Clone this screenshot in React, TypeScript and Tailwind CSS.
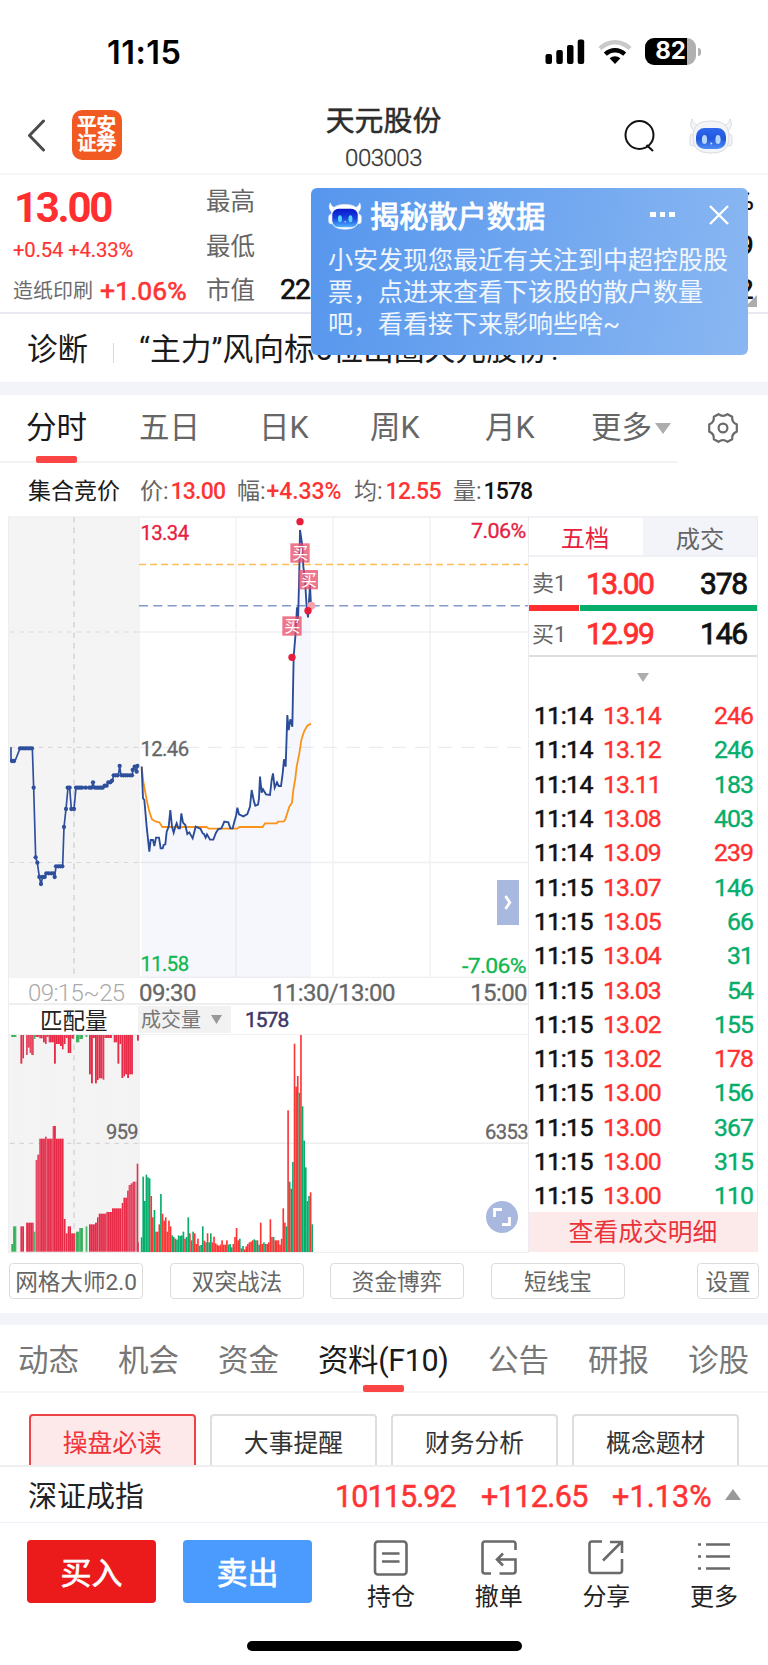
import React from "react";

type Bar = [number, string];
type Range = [number, number, number, string];

const RED = "#e52b48";
const GREEN = "#2fae54";

const auction =
  "33,712 33,753 45,753 60,715 97,715 101,833 107,1042 112,1058 118,1101 123,1122 128,1101 135,1101 138,1090 162,1090 164,1101 168,1069 188,1069 192,951 198,897 204,833 209,833 214,897 222,897 228,833 275,833 279,817 283,833 308,833 320,827 325,817 337,812 341,796 355,796 359,768 363,796 396,796 402,768 408,785 413,768";
const auctionDots =
  "36,753 42,753 60,715 66,715 72,715 78,715 84,715 90,715 96,715 101,833 107,1042 112,1058 118,1101 123,1122 128,1101 134,1101 139,1090 146,1090 154,1090 161,1090 164,1101 168,1069 175,1069 181,1069 187,1069 192,951 198,897 203,833 209,833 214,897 222,897 228,833 234,833 240,833 246,833 257,833 268,833 274,833 279,817 285,833 291,833 297,833 303,833 308,833 314,827 320,827 325,817 331,817 336,812 341,796 347,796 353,796 359,768 365,796 371,796 377,796 383,796 390,796 396,796 398,780 404,770 410,785 412,768";
const price =
  "35,770 39,865 43,870 50,950 58,1025 62,990 69,990 73,1008 78,983 87,983 92,1015 98,1015 101,1005 106,1003 110,965 116,950 121,900 126,950 131,968 136,950 140,940 145,955 150,955 154,910 159,938 166,945 172,972 178,967 188,985 197,950 212,957 218,970 222,972 227,983 231,973 240,989 250,989 258,968 265,957 274,955 283,935 295,937 301,955 308,955 313,935 318,918 322,893 327,913 340,919 352,912 360,890 365,840 372,875 376,887 384,884 387,865 390,800 395,848 399,838 408,853 420,855 425,810 429,790 434,833 441,817 446,828 453,828 458,790 462,748 467,770 472,615 476,660 481,628 487,650 491,440 496,380 501,292 504,338 508,180 510,60 516,100 520,170 525,210 530,290 534,322 540,225 543,288";
const average =
  "35,770 40,815 50,870 58,905 66,928 78,935 88,937 97,951 230,951 236,956 322,956 328,951 398,951 405,940 440,940 444,935 462,934 466,928 478,890 486,878 490,840 496,805 500,770 508,730 514,690 522,665 532,647 543,641";

const volume: Bar[] = (
  "802g 620g 693g 614g 622g 625g 678r 742r 720g 785r 785r 763r 672g 731r 752r 742r 785r 752r 769r 796g 801g 806r 809g 796g 798g 796g 785g 806r 801g 742g 790r 811r 785g 790r 822r 806r 827g 825g 769g 812r 817g 790r 817g 790g 817r 800r 820r 824r 827r 824r 811r 824r 824r 811r 824g 822g 832g 822r 801r 774r 811r 806g 835r 828g 838r 829r 822r 817r 815r 811r 808g 811g 811r 824g 758r 822r 817g 822g 822r 817r 748r 801r 801g 811r 811r 811r 824r 806r 715r 758r 769g 421r 635g 656r 576g 221r 350r 318r 368g 195r 409g 512g 592g 693g 678g 667r 763g"
)
  .split(" ")
  .map((s) => [parseInt(s, 10), s.slice(-1)]);

const matched: Range[] = [
  [34, 39, 822, GREEN], [39, 49, 769, GREEN], [61, 72, 769, RED], [78, 101, 758, RED], [101, 106, 785, GREEN],
  [107, 112, 570, RED], [112, 118, 554, RED], [118, 135, 506, RED], [135, 140, 500, RED], [140, 158, 506, RED],
  [158, 168, 468, RED], [168, 191, 506, RED], [191, 197, 747, RED], [197, 203, 790, RED], [203, 213, 769, RED],
  [213, 226, 790, RED], [228, 238, 785, GREEN], [238, 249, 774, GREEN], [257, 262, 769, GREEN], [267, 285, 763, RED],
  [285, 291, 758, RED], [291, 296, 742, RED], [296, 319, 731, RED], [319, 336, 726, RED], [336, 365, 715, RED],
  [365, 370, 699, RED], [370, 381, 683, RED], [381, 386, 662, RED], [386, 392, 645, RED], [392, 398, 640, RED],
  [398, 406, 635, RED], [406, 410, 635, "#999999"], [410, 415, 581, RED], [413, 417, 817, RED],
];
const unmatched: Range[] = [
  [34, 49, 201, GREEN], [61, 67, 281, RED], [67, 72, 265, RED], [78, 83, 255, RED], [83, 89, 233, RED],
  [89, 94, 249, RED], [94, 101, 255, RED], [101, 106, 207, GREEN], [106, 118, 201, RED], [118, 128, 205, RED],
  [129, 135, 217, RED], [135, 140, 222, RED], [140, 146, 201, RED], [146, 162, 217, RED], [162, 168, 281, RED],
  [168, 180, 222, RED], [180, 186, 228, RED], [186, 191, 238, RED], [191, 197, 222, RED], [197, 203, 204, RED],
  [203, 214, 249, RED], [214, 222, 206, RED], [228, 238, 217, GREEN], [238, 249, 207, GREEN], [257, 262, 201, GREEN],
  [267, 273, 313, RED], [273, 279, 340, RED], [279, 285, 204, RED], [285, 291, 340, RED], [291, 296, 330, RED],
  [296, 308, 325, RED], [308, 313, 329, RED], [313, 336, 204, RED], [341, 352, 217, RED], [352, 358, 281, RED],
  [358, 364, 222, RED], [364, 370, 324, RED], [370, 375, 319, RED], [375, 381, 313, RED], [381, 387, 324, RED],
  [387, 399, 313, RED], [411, 417, 212, RED],
];

const trades: [string, string, string, boolean][] = [
  ["11:14", "13.14", "246", true],
  ["11:14", "13.12", "246", false],
  ["11:14", "13.11", "183", false],
  ["11:14", "13.08", "403", false],
  ["11:14", "13.09", "239", true],
  ["11:15", "13.07", "146", false],
  ["11:15", "13.05", "66", false],
  ["11:15", "13.04", "31", false],
  ["11:15", "13.03", "54", false],
  ["11:15", "13.02", "155", false],
  ["11:15", "13.02", "178", true],
  ["11:15", "13.00", "156", false],
  ["11:15", "13.00", "367", false],
  ["11:15", "13.00", "315", false],
  ["11:15", "13.00", "110", false],
];

function Robot({ className, soft }: { className: string; soft?: boolean }) {
  return (
    <svg viewBox="0 0 44 36" className={className}>
      <defs>
        <linearGradient id={soft ? "face-a" : "face-b"} x1="0" y1="0" x2="0" y2="1">
          <stop offset="0" stopColor={soft ? "#2f68ee" : "#0a16c8"} />
          <stop offset="0.5" stopColor={soft ? "#2257dc" : "#1740e0"} />
          <stop offset="1" stopColor={soft ? "#4d8cf5" : "#4fb4ff"} />
        </linearGradient>
      </defs>
      <g fill={soft ? "#f3f4f7" : "#ffffff"} stroke={soft ? "#d5d7dd" : "#e8eefb"} strokeWidth="0.9">
        <path d="M3 1C1 5 1 9 5 13L10 7C6 7 4 5 3 1ZM41 1C43 5 43 9 39 13L34 7C38 7 40 5 41 1Z" />
        <rect x="1" y="16" width="6" height="12" rx="3" />
        <rect x="37" y="16" width="6" height="12" rx="3" />
        <path d="M22 3C34 3 40 7 40 19C40 30 35 35 22 35C9 35 4 30 4 19C4 7 10 3 22 3Z" />
      </g>
      <rect x={soft ? 7 : 5.5} y={soft ? 10 : 8.5} width={soft ? 30 : 33} height={soft ? 21 : 24} rx="8.5" fill={soft ? "url(#face-a)" : "url(#face-b)"} />
      <ellipse cx="15.5" cy="21.5" rx="2.6" ry="4.6" fill={soft ? "#b5d5fb" : "#58d4ff"} />
      <ellipse cx="29" cy="21.5" rx="2.6" ry="4.6" fill={soft ? "#b5d5fb" : "#58d4ff"} />
      <circle cx="22.3" cy="25.5" r="1" fill="#cfe2ff" />
    </svg>
  );
}

function StatusBar() {
  return (
    <div className="flex h-[95px] items-start justify-between pl-[107px] pr-[67px]">
      <div className="mt-[37px] font-[Inter] text-[32.5px] leading-[32px] font-semibold tracking-[0.5px] text-black">11:15</div>
      <div className="mt-[38px] flex items-center">
        <svg width="40" height="27" viewBox="0 0 40 27">
          <rect x="0.5" y="16" width="6.5" height="10" rx="2" />
          <rect x="11.3" y="12" width="6.5" height="14" rx="2" />
          <rect x="22" y="7" width="6.5" height="19" rx="2" />
          <rect x="32.7" y="1.5" width="6.5" height="24.5" rx="2" />
        </svg>
        <svg width="34" height="26" viewBox="0 0 34 26" className="ml-[13px]" fill="none">
          <path d="M2 9.5C10.5 1.2 23.5 1.2 32 9.5" stroke="#c9c9c9" strokeWidth="4.4" />
          <path d="M7.3 15.2C13 9.9 21 9.9 26.7 15.2" stroke="#000" strokeWidth="4.4" />
          <path d="M11.6 19.3C14.8 16.6 19.2 16.6 22.4 19.3L17 25Z" fill="#000" />
        </svg>
        <div className="ml-[13px] flex h-[27px] w-[51px] items-center justify-center rounded-[9px] bg-[linear-gradient(90deg,#000_83%,#b0b0b0_83%)] pb-px font-[Inter] text-[24px] leading-none font-bold text-white">
          82
        </div>
        <div className="ml-[2px] h-[8px] w-[3px] rounded-r-full bg-[#b0b0b0]" />
      </div>
    </div>
  );
}

function Header() {
  return (
    <div className="flex h-[80px] border-b-2 border-[#f7f7f7]">
      <div className="flex w-[255px] pl-[26px] pt-[15px]">
        <svg width="22" height="34" viewBox="0 0 22 34" className="mt-[8px]" fill="none" stroke="#4b4b4b" strokeWidth="3" strokeLinecap="round" strokeLinejoin="round">
          <path d="M17.5 3L3.5 17.5L17.5 32" />
        </svg>
        <div className="ml-[23.5px] flex h-[50px] w-[50px] flex-col items-center justify-center rounded-[10px] bg-[#f15a22] text-[19.5px] leading-[18px] text-white [-webkit-text-stroke:0.9px]">
          <span>平安</span>
          <span>证券</span>
        </div>
      </div>
      <div className="flex w-[257px] flex-col items-center pt-[10px]">
        <div className="text-[28.9px] leading-[32px] text-[#2d2d2d] [-webkit-text-stroke:0.5px]">天元股份</div>
        <div className="mt-[8px] text-[24px] leading-[26px] font-light tracking-[-0.5px] text-[#333] [-webkit-text-stroke:0.3px]">003003</div>
      </div>
      <div className="flex flex-1 pl-[112px] pt-[23px]">
        <svg width="32" height="34" viewBox="0 0 32 34" fill="none" stroke="#111" strokeWidth="2" className="mt-[1px]">
          <circle cx="15.5" cy="16" r="14" />
          <path d="M22.5 26L29 32" />
        </svg>
        <Robot soft className="ml-[33px] h-[36px] w-[44px]" />
      </div>
    </div>
  );
}

function Quote() {
  return (
    <div className="relative">
      <div className="flex h-[139px] border-b-2 border-[#e7e8f1]">
        <div className="w-[206px] pl-[13px]">
          <div className="mt-[8px] pl-px text-[42px] leading-[50px] font-bold tracking-[-2.3px] text-[#ff2f2f]">13.00</div>
          <div className="mt-[4px] text-[20.3px] leading-[26px] tracking-[-0.15px] text-[#ff3333] [-webkit-text-stroke:0.2px]">+0.54 +4.33%</div>
          <div className="mt-[15px] flex items-center text-[20px] leading-[26px] whitespace-nowrap text-[#6b6b6b]">
            造纸印刷
            <span className="ml-[7px] text-[26.5px] tracking-[0.1px] text-[#ff3333] [-webkit-text-stroke:0.6px]">+1.06%</span>
          </div>
        </div>
        <div className="w-[74px] text-[24.5px] leading-[44.5px] text-[#666]">
          <div className="mt-[5px]">最高</div>
          <div>最低</div>
          <div>市值</div>
        </div>
        <div className="mt-[93px] text-[28.5px] leading-[44px] tracking-[-1px] text-[#111] [-webkit-text-stroke:0.6px]">22</div>
        <div className="ml-auto pr-[14px] text-right text-[28px] leading-[44.5px] font-medium text-[#111]">
          <div className="mt-[4px]">%</div>
          <div>9</div>
          <div>2</div>
        </div>
        <svg width="12" height="12" viewBox="0 0 12 12" className="absolute top-[120px] right-[11px]">
          <path d="M12 0V12H0Z" fill="#adadad" />
        </svg>
      </div>
      <div className="flex h-[68px] items-center pt-[3px] whitespace-nowrap text-[#1a1a1a]">
        <div className="pl-[27px] text-[30.5px] leading-[34px]">诊断</div>
        <div className="mt-[7px] ml-[25px] h-[20px] w-px bg-[#d9d9d9]" />
        <div className="ml-[25px] text-[30.8px] leading-[34px]">“主力”风向标5位出圈天元股份?</div>
      </div>
      <div className="absolute top-[13px] left-[311px] h-[167px] w-[437px] rounded-[6px] bg-[linear-gradient(100deg,#5696ed_0%,#6aa3ef_40%,#8ab7f2_100%)] pt-[10px] pl-[17px] text-white">
        <div className="flex h-[38px] items-center">
          <Robot className="-mt-[3px] h-[28px] w-[34px]" />
          <div className="ml-[8px] text-[29.2px] leading-[38px] [-webkit-text-stroke:0.9px]">揭秘散户数据</div>
          <div className="-mt-[5px] ml-[105px] flex gap-[4px]">
            <i className="h-[5.5px] w-[5.5px] bg-white" />
            <i className="h-[5.5px] w-[5.5px] bg-white" />
            <i className="h-[5.5px] w-[5.5px] bg-white" />
          </div>
          <svg width="20" height="20" viewBox="0 0 20 20" className="-mt-[5px] ml-[34px]" stroke="#fff" strokeWidth="2.4">
            <path d="M1 1L19 19M19 1L1 19" />
          </svg>
        </div>
        <div className="mt-[9px] w-[402px] text-[25px] leading-[32px] text-white/90">
          <div>小安发现您最近有关注到中超控股股</div>
          <div>票，点进来查看下该股的散户数量</div>
          <div>吧，看看接下来影响些啥~</div>
        </div>
      </div>
    </div>
  );
}

function PeriodTabs() {
  return (
    <div className="flex h-[68px] text-[30.5px] leading-[34px] text-[#666]">
      <div className="flex w-[678px] border-b-2 border-[#f2f2f2] pl-[26px] whitespace-nowrap">
        <div className="flex w-[113px] flex-col text-[#1a1a1a]">
          <span className="mt-[16px]">分时</span>
          <span className="mt-[11px] ml-[10px] h-[7px] w-[41px] shrink-0 rounded-[2px] bg-[#fb4444]" />
        </div>
        <span className="mt-[16px] w-[120px]">五日</span>
        <span className="mt-[16px] w-[111px]">日K</span>
        <span className="mt-[16px] w-[115px]">周K</span>
        <span className="mt-[16px] w-[106px]">月K</span>
        <span className="mt-[16px]">更多</span>
        <svg width="16" height="11" viewBox="0 0 16 11" className="mt-[28px] ml-[3px] shrink-0">
          <path d="M0 0H16L8 11Z" fill="#adadad" />
        </svg>
      </div>
      <svg width="32" height="32" viewBox="0 0 32 32" className="mt-[17px] ml-[29px]" fill="none" stroke="#6a6a6a" strokeWidth="2.2" strokeLinejoin="round">
        <path d="M11.5 2.2Q16 5.6 20.5 2.2L25.2 4.8Q24.6 10.4 29.8 12.4V19.6Q24.6 21.6 25.2 27.2L20.5 29.8Q16 26.4 11.5 29.8L6.8 27.2Q7.4 21.6 2.2 19.6V12.4Q7.4 10.4 6.8 4.8Z" />
        <circle cx="16" cy="16" r="4.4" />
      </svg>
    </div>
  );
}

function Summary() {
  return (
    <div className="flex h-[53px] items-center pt-[5px] pl-[28px] text-[23px] whitespace-nowrap text-[#666]">
      <div className="w-[112px] text-[#1a1a1a]">集合竞价</div>
      <div className="w-[97px]">
        价:<b className="ml-[2px] font-medium tracking-[-0.8px] text-[#ff3333]">13.00</b>
      </div>
      <div className="w-[117px]">
        幅:<b className="ml-px font-medium tracking-[-0.1px] text-[#ff3333]">+4.33%</b>
      </div>
      <div className="w-[99px]">
        均:<b className="ml-[3px] font-medium tracking-[-0.7px] text-[#ff3333]">12.55</b>
      </div>
      <div>
        量:<b className="ml-[2px] font-medium tracking-[-0.9px] text-[#111]">1578</b>
      </div>
    </div>
  );
}

function PriceChart() {
  return (
    <svg width="519" height="462" viewBox="9 516 519 462" className="block font-[Roboto]">
      <rect x="9" y="517" width="130" height="461" fill="#f4f4f4" />
      <path d="M139 517V978M236 517V978M333 517V978M430 517V978M139 632H528M139 862.5H528M9 517H528M139 977.5H528" stroke="#f0f0f0" strokeWidth="1.3" />
      <path d="M139 747.3H528" stroke="#ececec" strokeWidth="1.2" strokeDasharray="14 9" />
      <path d="M10 632H139M10 747.3H139M10 862.5H139" stroke="#d9d9d9" strokeWidth="1.2" strokeDasharray="4.5 5" />
      <path d="M74 517V978" stroke="#dadada" strokeWidth="1.8" strokeDasharray="5.5 5" />
      <path d="M139 564.5H528" stroke="#fdbd5b" strokeWidth="1.5" strokeDasharray="7 4" />
      <path d="M139 605.7H528" stroke="#8598cb" strokeWidth="1.6" strokeDasharray="9 5.3" />
      <g transform="translate(0 510) scale(0.33333)" fill="none" strokeLinejoin="round">
        <polyline points={auction} stroke="#2d4f9c" strokeWidth="5" />
        {auctionDots.split(" ").map((p) => {
          const [x, y] = p.split(",");
          return <circle key={p} cx={x} cy={y} r="6.4" fill="#2d4f9c" />;
        })}
      </g>
      <g transform="translate(130 510) scale(0.33333)" fill="none" strokeLinejoin="miter">
        <polygon points={price + " 543,1402 35,1402"} fill="#5f7fd0" fillOpacity="0.06" />
        <polyline points={average} stroke="#fb9219" strokeWidth="5.4" />
        <polyline points={price} stroke="#2b4c99" strokeWidth="5.6" />
        <circle cx="544" cy="287" r="12" fill="#f6a3ae" />
        <g fill="#e71d3c">
          <circle cx="510" cy="35" r="11" />
          <circle cx="534" cy="302" r="11" />
          <circle cx="486" cy="442" r="11" />
        </g>
        <g fill="#ea4a67" fillOpacity="0.75">
          <rect x="481" y="100" width="58" height="58" />
          <rect x="506" y="180" width="58" height="58" />
          <rect x="457" y="319" width="58" height="58" />
        </g>
      </g>
      <g fill="#fff" fontSize="16" textAnchor="middle" fontFamily="'Noto Sans CJK SC', sans-serif">
        <text x="300" y="559">买</text>
        <text x="308.5" y="585.6">买</text>
        <text x="292" y="632">买</text>
      </g>
      <g fontSize="20.5" strokeWidth="0.3">
        <text x="140.5" y="539.7" textLength="48" lengthAdjust="spacingAndGlyphs" fill="#e6213f" stroke="#e6213f">13.34</text>
        <text x="140.5" y="756" textLength="48" lengthAdjust="spacingAndGlyphs" fill="#666" stroke="#666">12.46</text>
        <text x="140.5" y="971" textLength="48" lengthAdjust="spacingAndGlyphs" fill="#0fb850" stroke="#0fb850">11.58</text>
        <text x="471" y="538" textLength="54.5" lengthAdjust="spacingAndGlyphs" fill="#e6213f" stroke="#e6213f">7.06%</text>
        <text x="462" y="973" textLength="64" lengthAdjust="spacingAndGlyphs" fill="#0fb850" stroke="#0fb850">-7.06%</text>
      </g>
    </svg>
  );
}

function VolumeChart() {
  return (
    <svg width="519" height="219" viewBox="9 1034 519 219" className="block font-[Roboto]">
      <rect x="9" y="1034" width="130" height="218" fill="#f4f4f4" />
      <path d="M139 1034V1252M139 1143.3H528M9 1252.4H528" stroke="#eeeeee" strokeWidth="1.4" />
      <path d="M9 1034.3H528" stroke="#eeeeee" />
      <path d="M10 1143.3H139" stroke="#d4d4d4" strokeWidth="1.2" strokeDasharray="4.5 5" />
      <path d="M74 1034V1252" stroke="#dadada" strokeWidth="1.8" strokeDasharray="5.5 5" />
      <g transform="translate(0 970) scale(0.33333)">
        {matched.map(([a, b, top, c]) => (
          <rect key={a} x={a} y={top} width={b - a} height={845 - top} fill={c} />
        ))}
        {unmatched.map(([a, b, bottom, c]) => (
          <rect key={a} x={a} y={195} width={b - a} height={bottom - 195} fill={c} />
        ))}
        {Array.from({ length: 66 }, (_, i) => (
          <rect key={i} x={39 + i * 5.8} y="195" width="0.9" height="650" fill="#f4f4f4" fillOpacity="0.5" />
        ))}
        {volume.map(([top, c], i) => (
          <rect key={i} x={422.3 + i * 4.83} y={top} width="4.9" height={846 - top} fill={c === "r" ? "#fc3434" : "#06ad6b"} />
        ))}
      </g>
      <g fontSize="20.5" fill="#666" stroke="#666" strokeWidth="0.3">
        <text x="106" y="1138.5" textLength="32" lengthAdjust="spacingAndGlyphs">959</text>
        <text x="485" y="1138.5" textLength="43" lengthAdjust="spacingAndGlyphs">6353</text>
      </g>
    </svg>
  );
}

function Chart() {
  return (
    <div className="relative w-[520px] border-l border-[#eeeeee] tracking-[-0.6px]">
      <PriceChart />
      <div className="flex h-[27px] items-center border-b-2 border-[#efefef] pt-[5px] pr-px pl-[19px] text-[24px] leading-[22px] text-[#666]">
        <span className="w-[111px] font-light text-[#aaa]">09:15~25</span>
        <span className="w-[133px] [-webkit-text-stroke:0.3px]">09:30</span>
        <span className="[-webkit-text-stroke:0.3px]">11:30/13:00</span>
        <span className="ml-auto [-webkit-text-stroke:0.3px]">15:00</span>
      </div>
      <div className="flex h-[29px] items-center tracking-normal">
        <div className="w-[129px] pt-[3px] pl-[31px] text-[22.5px] leading-[26px] text-[#222]">匹配量</div>
        <div className="flex h-[27px] w-[93px] items-center bg-[#f2f2f2] pl-[3px] text-[20px] leading-[24px] text-[#777]">
          成交量
          <svg width="11" height="9" viewBox="0 0 11 9" className="ml-[10px]">
            <path d="M0 0H11L5.5 9Z" fill="#999" />
          </svg>
        </div>
        <div className="ml-[14px] text-[21px] leading-[24px] tracking-[-1px] text-[#3d3766] [-webkit-text-stroke:0.5px]">1578</div>
      </div>
      <VolumeChart />
      <div className="absolute top-[364px] left-[488px] flex h-[45px] w-[22px] items-center justify-center bg-[#a9b8de]">
        <svg width="8" height="15" viewBox="0 0 8 15" fill="none" stroke="#fff" strokeWidth="2.8">
          <path d="M1.5 1L5.8 7.5L1.5 14" />
        </svg>
      </div>
      <div className="absolute top-[685px] left-[477px] flex h-[32px] w-[32px] items-center justify-center rounded-full bg-[#a9b8de]">
        <svg width="18" height="18" viewBox="0 0 18 18" fill="none" stroke="#fff" strokeWidth="2.8">
          <path d="M1.5 9V1.5H9M16.5 9V16.5H9" />
        </svg>
      </div>
    </div>
  );
}

function OrderBook() {
  return (
    <div className="w-[230px] border-x border-[#ececf0]">
      <div className="flex h-[41px] border-y-2 border-[#f0f1f5] text-[24.3px] leading-[43px]">
        <div className="w-[114px] pt-px pr-[2px] text-center leading-[40px] text-[#e8203c]">五档</div>
        <div className="flex-1 bg-[#f3f4f9] text-center text-[#666]">成交</div>
      </div>
      <div className="flex h-[48px] items-center pl-[3px] text-[22px] text-[#666]">
        <span className="w-[54px] pt-[4px] whitespace-nowrap">卖1</span>
        <span className="pt-[5px] text-[30px] leading-[34px] tracking-[-1.6px] text-[#ff2f2f] [-webkit-text-stroke:0.8px]">13.00</span>
        <span className="ml-auto pt-[5px] pr-[10px] text-[30px] leading-[34px] tracking-[-1.2px] text-[#111] [-webkit-text-stroke:0.8px]">378</span>
      </div>
      <div className="flex h-[6px] gap-px">
        <div className="w-[50px] bg-[#ff2f2f]" />
        <div className="flex-1 bg-[#06ad6b]" />
      </div>
      <div className="flex h-[46px] items-center border-b-2 border-[#dedede] pl-[3px] text-[22px] text-[#666]">
        <span className="w-[54px] pt-[3px] whitespace-nowrap">买1</span>
        <span className="pt-[2px] text-[30px] leading-[34px] tracking-[-1.6px] text-[#ff2f2f] [-webkit-text-stroke:0.8px]">12.99</span>
        <span className="ml-auto pt-[2px] pr-[10px] text-[30px] leading-[34px] tracking-[-1.2px] text-[#111] [-webkit-text-stroke:0.8px]">146</span>
      </div>
      <div className="flex h-[41px] items-center justify-center">
        <svg width="12" height="9" viewBox="0 0 12 9">
          <path d="M0 0H12L6 9Z" fill="#adadad" />
        </svg>
      </div>
      {trades.map(([t, p, v, up], i) => (
        <div key={i} className="flex h-[34.3px] items-center pt-[2px] pr-[4px] pl-[5px] text-[24.8px] leading-[30px] tracking-[-0.9px]">
          <span className="w-[69px] tracking-[-0.6px] text-[#111] [-webkit-text-stroke:0.6px]">{t}</span>
          <span className="text-[#ff3030] [-webkit-text-stroke:0.4px]">{p}</span>
          <span className={up ? "ml-auto text-[#ff3030] [-webkit-text-stroke:0.4px]" : "ml-auto text-[#06ad6b] [-webkit-text-stroke:0.4px]"}>{v}</span>
        </div>
      ))}
      <div className="h-[40px] bg-[#fce9ea] text-center text-[24.8px] leading-[42px] text-[#ea3338]">查看成交明细</div>
    </div>
  );
}

function Chip({ label, className }: { label: string; className: string }) {
  return (
    <div className={"flex h-[36px] items-center justify-center rounded-[4px] border-[1.5px] border-[#dcdcdc] pt-[4px] text-[22.6px] leading-none whitespace-nowrap text-[#666] " + className}>
      {label}
    </div>
  );
}

function Action({ label, children }: { label: string; children: React.ReactNode }) {
  return (
    <div className="flex w-[60px] flex-col items-center text-[24px] leading-[28px] text-[#222]">
      <svg width="36" height="36" viewBox="0 0 36 36" fill="none" stroke="#6a6a6a" strokeWidth="2.6">
        {children}
      </svg>
      <span className="mt-[7px]">{label}</span>
    </div>
  );
}

export default function App() {
  return (
    <div className="flex h-[1665px] w-[768px] flex-col overflow-hidden bg-white font-[Roboto,'Noto_Sans_CJK_SC',sans-serif]">
      <StatusBar />
      <Header />
      <Quote />
      <div className="h-[13px] bg-[#f3f4f9]" />
      <PeriodTabs />
      <Summary />
      <div className="flex pl-[8px]">
        <Chart />
        <OrderBook />
      </div>
      <div className="mt-[10px] flex pl-[9px]">
        <Chip label="网格大师2.0" className="w-[134px]" />
        <Chip label="双突战法" className="ml-[27px] w-[134px]" />
        <Chip label="资金博弈" className="ml-[26px] w-[134px]" />
        <Chip label="短线宝" className="ml-[27px] w-[134px]" />
        <Chip label="设置" className="ml-[72px] w-[62px]" />
      </div>
      <div className="mt-[14px] h-[12px] bg-[#f3f4f9]" />
      <div className="flex h-[68px] border-b-2 border-[#f7f7f7] pl-[18px] text-[30.5px] leading-[34px] whitespace-nowrap text-[#777]">
        <span className="mt-[19px] w-[100px]">动态</span>
        <span className="mt-[19px] w-[100px]">机会</span>
        <span className="mt-[19px] w-[100px]">资金</span>
        <div className="flex w-[170px] flex-col text-[#1a1a1a]">
          <span className="mt-[19px] tracking-[-0.4px]">资料(F10)</span>
          <span className="mt-[7px] ml-[45px] h-[7px] w-[41px] shrink-0 rounded-[2px] bg-[#fb4444]" />
        </div>
        <span className="mt-[19px] w-[100px]">公告</span>
        <span className="mt-[19px] w-[100px]">研报</span>
        <span className="mt-[19px]">诊股</span>
      </div>
      <div className="flex h-[74px] gap-[14.5px] overflow-hidden border-b-2 border-[#efefef] px-[29px] pt-[21px] text-[24.8px] leading-[56px] text-[#333]">
        <div className="h-[70px] flex-1 rounded-[4px] border-2 border-[#ee4246] bg-[#fee9ea] text-center text-[#f03338]">操盘必读</div>
        <div className="h-[70px] flex-1 rounded-[4px] border-2 border-[#dedede] text-center">大事提醒</div>
        <div className="h-[70px] flex-1 rounded-[4px] border-2 border-[#dedede] text-center">财务分析</div>
        <div className="h-[70px] flex-1 rounded-[4px] border-2 border-[#dedede] text-center">概念题材</div>
      </div>
      <div className="flex h-[56px] items-center border-b border-[#f0f0f8] pt-[4px] pl-[28px] text-[30.5px] leading-[34px] text-[#ff3333] [-webkit-text-stroke:0.5px]">
        <span className="w-[307px] text-[29px] text-[#222] [-webkit-text-stroke:0]">深证成指</span>
        <span className="w-[146px] tracking-[-0.9px]">10115.92</span>
        <span className="w-[131px] tracking-[-0.6px]">+112.65</span>
        <span className="w-[113px] tracking-[0.1px]">+1.13%</span>
        <svg width="16" height="11" viewBox="0 0 16 11" className="mb-[4px]">
          <path d="M0 11H16L8 0Z" fill="#999" />
        </svg>
      </div>
      <div className="flex pt-[17px] pl-[27px] text-[31px] leading-[67px] text-white">
        <div className="h-[63px] w-[129px] rounded-[4px] bg-[#eb1a1b] text-center [-webkit-text-stroke:0.7px]">买入</div>
        <div className="ml-[27px] h-[63px] w-[129px] rounded-[4px] bg-[#4b9bff] text-center [-webkit-text-stroke:0.7px]">卖出</div>
        <div className="ml-[49px] flex gap-[47.7px]">
          <Action label="持仓">
            <rect x="2" y="1.5" width="31.5" height="33" rx="3" />
            <path d="M9 13.5H26.5M9 21.5H26.5" />
          </Action>
          <Action label="撤单">
            <path d="M34.5 10V4Q34.5 1.5 32 1.5H4Q1.5 1.5 1.5 4V31Q1.5 33.5 4 33.5H10M18.5 33.5H32Q34.5 33.5 34.5 31V19.5H16M22 13.5L16 19.5L22 25.5" />
          </Action>
          <Action label="分享">
            <path d="M14 1.5H4Q1.5 1.5 1.5 4V30.5Q1.5 33 4 33H31.5Q34 33 34 30.5V19M15 20.5L33 2.5M22 2H34V13" />
          </Action>
          <Action label="更多">
            <path d="M2 4.5H5M10 4.5H34M2 16.5H5M10 16.5H34M2 28.5H5M10 28.5H34" />
          </Action>
        </div>
      </div>
      <div className="mx-auto mt-auto mb-[14px] h-[10px] w-[275px] shrink-0 rounded-full bg-black" />
    </div>
  );
}
